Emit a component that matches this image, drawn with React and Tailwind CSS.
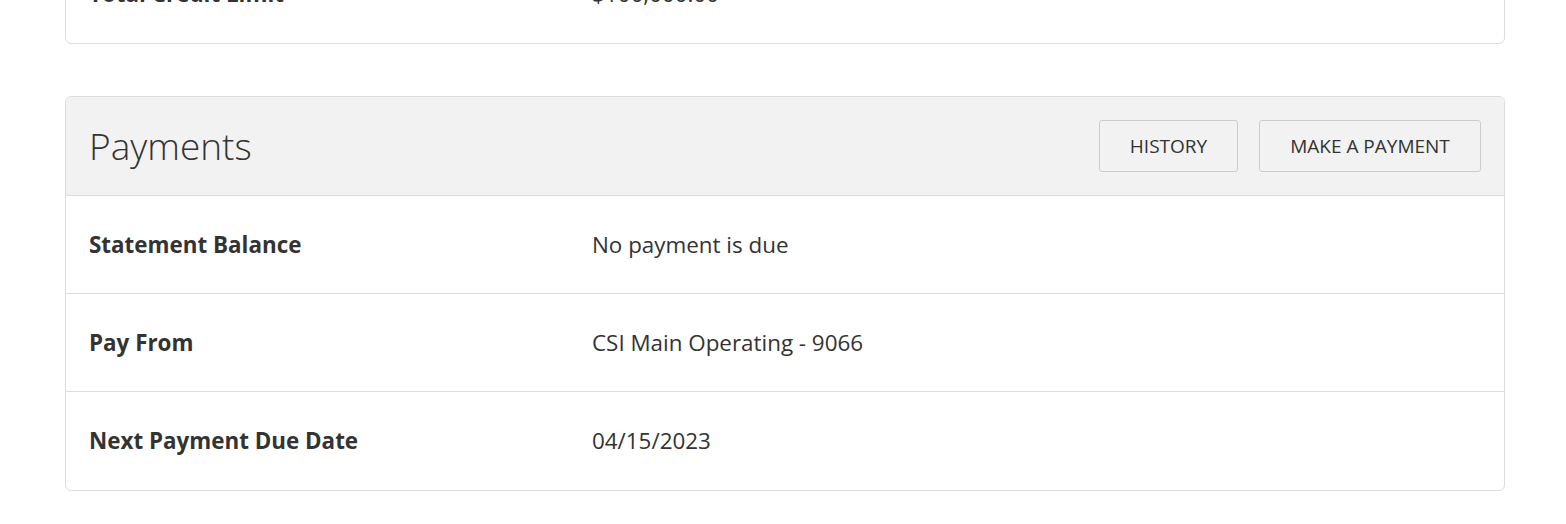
import React from 'react';

const rows = [
    { label: 'Statement Balance', value: 'No payment is due' },
    { label: 'Pay From', value: 'CSI Main Operating - 9066' },
    { label: 'Next Payment Due Date', value: '04/15/2023' },
];

const Row = ({ label, value, last }) => (
    <div className={`flex items-center h-[98px] ${last ? '' : 'border-b border-[#dddddd]'}`}>
        <div className="w-[503px] pl-[23px] text-[22.4px] font-bold text-[#333333]">{label}</div>
        <div className="pl-[23px] text-[22.4px] text-[#333333]">{value}</div>
    </div>
);

const App = () => {
    return (
        <div
            className="min-h-[524px] bg-white pl-[65px] pr-[61px] overflow-hidden"
            style={{ fontFamily: '"Open Sans", "Noto Sans", sans-serif' }}
        >
            {/* Credit card summary (scrolled off the top) */}
            <div className="-mt-[56px] border border-[#dddddd] rounded-[6px] bg-white">
                <Row label="Total Credit Limit" value="$100,000.00" last />
            </div>

            {/* Payments */}
            <div className="mt-[52px] border border-[#dddddd] rounded-[6px] bg-white overflow-hidden">
                <div className="flex items-center justify-between h-[99px] bg-[#f2f2f2] border-b border-[#dddddd] pl-[23px] pr-[23px]">
                    <h2 className="text-[37px] font-light text-[#333333] leading-none -mt-[2px]">Payments</h2>
                    <div className="flex gap-[21px]">
                        <button className="h-[52px] w-[139px] border border-[#cccccc] rounded-[3px] bg-[#f2f2f2] text-[19px] text-[#333333]">
                            HISTORY
                        </button>
                        <button className="h-[52px] w-[222px] border border-[#cccccc] rounded-[3px] bg-[#f2f2f2] text-[19px] text-[#333333]">
                            MAKE A PAYMENT
                        </button>
                    </div>
                </div>
                {rows.map((r, i) => (
                    <Row key={r.label} label={r.label} value={r.value} last={i === rows.length - 1} />
                ))}
            </div>
        </div>
    );
};

export default App;
